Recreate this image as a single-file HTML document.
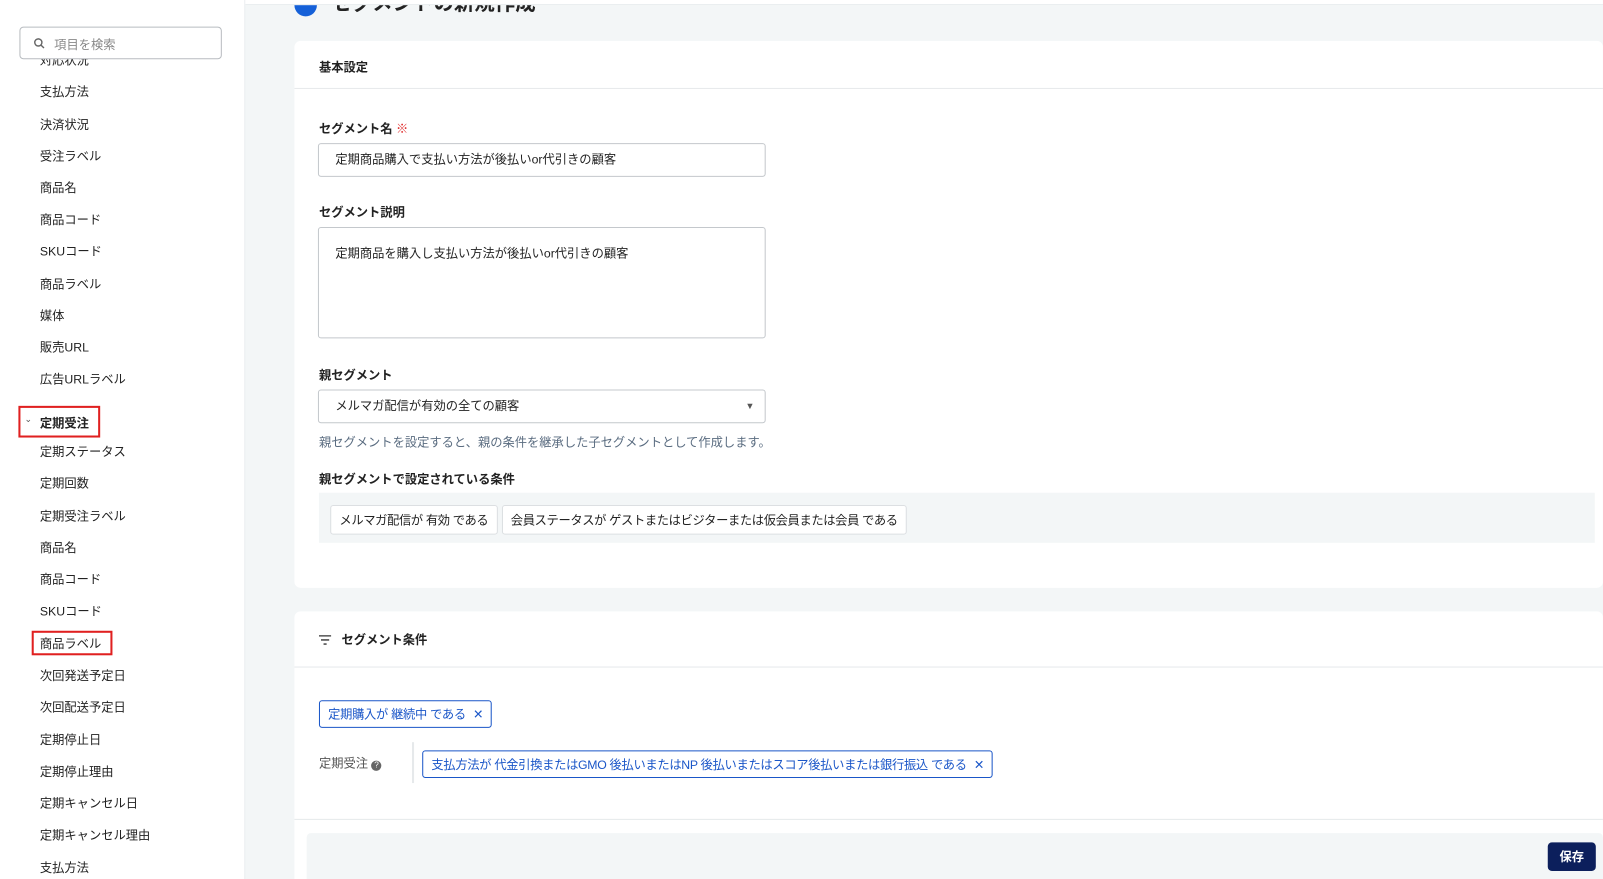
<!DOCTYPE html>
<html><head><meta charset="utf-8"><style>
*{box-sizing:border-box;margin:0;padding:0}
html,body{width:1603px;height:879px;overflow:hidden;background:#f3f6f7}
body{font-family:"Liberation Sans","Noto Sans CJK JP",sans-serif;color:#222}
#w{position:absolute;left:0;top:0;width:1568px;height:860px;transform:scale(1.0223);transform-origin:0 0;overflow:hidden}
.side{position:absolute;left:0;top:0;width:240px;height:860px;background:#fff;border-right:1px solid #e8ecee}
.search{position:absolute;left:19px;top:26px;width:198px;height:32px;border:1px solid #b8bcc0;border-radius:4px;background:#fff;font-size:12px;color:#888;padding:8px 0 0 33px;z-index:2}
.search svg{position:absolute;left:13px;top:10px}
.it{position:absolute;left:39px;font-size:12px;color:#222}
.topbar{position:absolute;left:240px;top:0;right:0;height:5px;background:#fff;border-bottom:1px solid #e8ecee;z-index:3}
.title{position:absolute;left:288px;top:-13px;font-size:20px;font-weight:bold;color:#222}
.title i{display:inline-block;width:22px;height:22px;border-radius:50%;background:#1560d8;vertical-align:middle;margin-right:14px}
.card{position:absolute;left:288px;right:0;background:#fff;border-radius:6px}
.hd{height:47px;border-bottom:1px solid #e6e9eb;font-size:12px;font-weight:bold;padding:17px 0 0 24px}
.lbl{position:absolute;left:24px;font-size:12px;font-weight:bold;color:#222}
.inp{position:absolute;left:23px;width:438px;border:1px solid #c4c8cc;border-radius:3px;font-size:12px;padding:0 16px;color:#222}
.chip{display:inline-block;border:1px solid #dcdfe2;border-radius:3px;background:#fff;font-size:12px;padding:5px 8px;margin-right:4px;letter-spacing:-0.35px}
.tag{position:absolute;border:1px solid #1a56c8;border-radius:3px;color:#1a56c8;font-size:12px;padding:4px 8px;background:#fff;letter-spacing:-0.3px}
.red{position:absolute;border:2px solid #e02020}
</style></head><body><div id="w">
<div class="side">
<div class="search"><svg width="11" height="11" viewBox="0 0 11 11"><circle cx="4.5" cy="4.5" r="3.5" stroke="#666" stroke-width="1.4" fill="none"/><path d="M7 7l3 3" stroke="#666" stroke-width="1.4"/></svg>項目を検索</div>
<div class="it" style="top:50px">対応状況</div>
<div class="it" style="top:81px">支払方法</div>
<div class="it" style="top:113px">決済状況</div>
<div class="it" style="top:144px">受注ラベル</div>
<div class="it" style="top:175px">商品名</div>
<div class="it" style="top:206px">商品コード</div>
<div class="it" style="top:237px">SKUコード</div>
<div class="it" style="top:269px">商品ラベル</div>
<div class="it" style="top:300px">媒体</div>
<div class="it" style="top:331px">販売URL</div>
<div class="it" style="top:362px">広告URLラベル</div>
<div class="red" style="left:18px;top:397px;width:80px;height:31px"></div>
<div class="it" style="left:24px;top:405px;font-size:9px;color:#555">⌄</div>
<div class="it" style="top:405px;font-weight:bold">定期受注</div>
<div class="it" style="top:433px">定期ステータス</div>
<div class="it" style="top:464px">定期回数</div>
<div class="it" style="top:496px">定期受注ラベル</div>
<div class="it" style="top:527px">商品名</div>
<div class="it" style="top:558px">商品コード</div>
<div class="it" style="top:589px">SKUコード</div>
<div class="red" style="left:31px;top:617px;width:79px;height:24px"></div>
<div class="it" style="top:621px">商品ラベル</div>
<div class="it" style="top:652px">次回発送予定日</div>
<div class="it" style="top:683px">次回配送予定日</div>
<div class="it" style="top:715px">定期停止日</div>
<div class="it" style="top:746px">定期停止理由</div>
<div class="it" style="top:777px">定期キャンセル日</div>
<div class="it" style="top:808px">定期キャンセル理由</div>
<div class="it" style="top:840px">支払方法</div>
</div>
<div class="topbar"></div>
<div class="title"><i></i>セグメントの新規作成</div>
<div class="card" style="top:40px;height:535px">
<div class="hd">基本設定</div>
<div class="lbl" style="top:77px">セグメント名 <span style="color:#e03030;font-weight:normal">※</span></div>
<div class="inp" style="top:100px;height:33px;line-height:31px">定期商品購入で支払い方法が後払いor代引きの顧客</div>
<div class="lbl" style="top:159px">セグメント説明</div>
<div class="inp" style="top:182px;height:109px;padding-top:16px">定期商品を購入し支払い方法が後払いor代引きの顧客</div>
<div class="lbl" style="top:318px">親セグメント</div>
<div class="inp" style="top:341px;height:33px;line-height:31px">メルマガ配信が有効の全ての顧客<span style="position:absolute;right:10px;top:0;font-size:9px;color:#555">▼</span></div>
<div style="position:absolute;left:24px;top:384px;font-size:12px;color:#5a6c80">親セグメントを設定すると、親の条件を継承した子セグメントとして作成します。</div>
<div class="lbl" style="top:420px">親セグメントで設定されている条件</div>
<div style="position:absolute;left:24px;top:442px;width:1248px;height:49px;background:#f3f6f7;padding:12px 0 0 11px"><span class="chip">メルマガ配信が 有効 である</span><span class="chip">会員ステータスが ゲストまたはビジターまたは仮会員または会員 である</span></div>
</div>
<div class="card" style="top:598px;height:290px">
<div class="hd" style="height:55px;padding-top:19px"><svg width="12" height="10" viewBox="0 0 12 10" style="margin-right:10px;vertical-align:-1px"><path d="M0 1h12M2 5h8M4.5 9h3" stroke="#333" stroke-width="1.3"/></svg>セグメント条件</div>
<div class="tag" style="left:24px;top:87px">定期購入が 継続中 である <span style="margin-left:4px">✕</span></div>
<div style="position:absolute;left:24px;top:140px;font-size:12px;color:#555">定期受注 <span style="display:inline-block;width:10px;height:10px;border-radius:50%;background:#666;color:#fff;font-size:8px;text-align:center;line-height:10px;vertical-align:0">?</span></div>
<div style="position:absolute;left:115px;top:128px;width:2px;height:40px;background:#e6e9eb"></div>
<div class="tag" style="left:125px;top:136px">支払方法が 代金引換またはGMO 後払いまたはNP 後払いまたはスコア後払いまたは銀行振込 である <span style="margin-left:4px">✕</span></div>
<div style="position:absolute;left:0;right:0;top:203px;border-top:1px solid #e6e9eb"></div>
<div style="position:absolute;left:12px;right:0;top:217px;height:80px;background:#f3f6f7;border-radius:4px"></div>
<div style="position:absolute;left:1226px;top:226px;width:47px;height:28px;background:#0c1f5c;border-radius:4px;color:#fff;font-size:12px;font-weight:bold;text-align:center;line-height:28px">保存</div>
</div>
</div></body></html>
